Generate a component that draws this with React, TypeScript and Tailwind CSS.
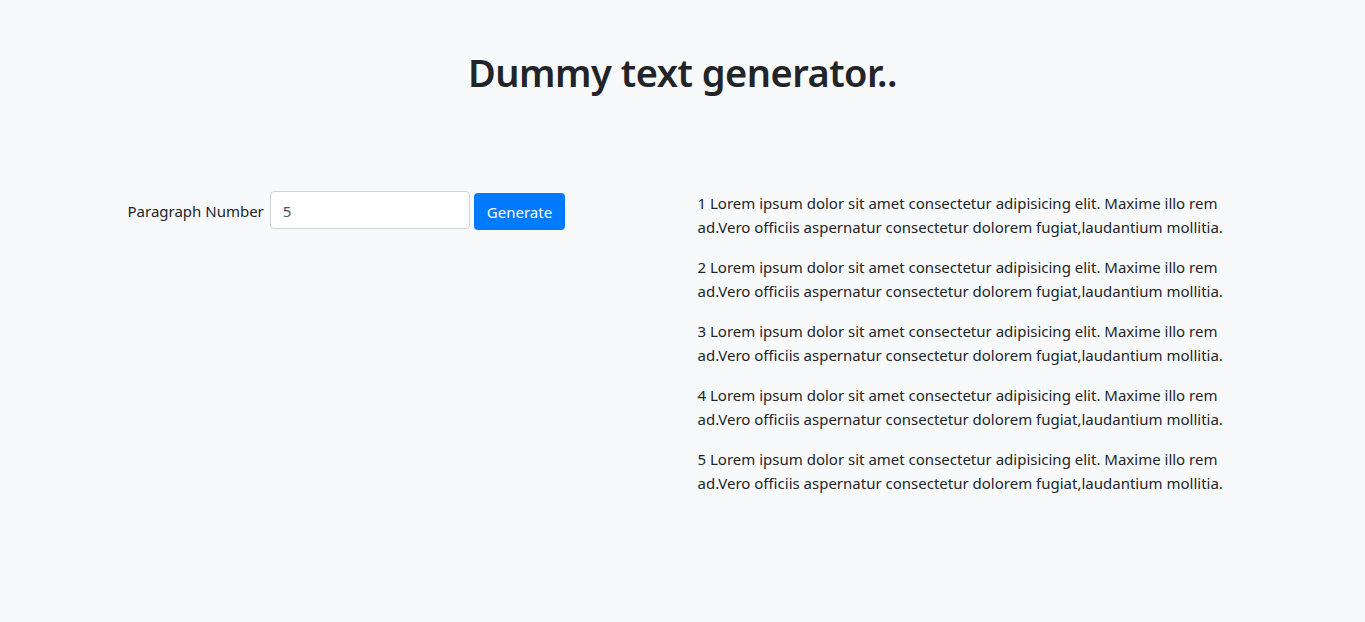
import { useState } from "react";

const lorem =
  "Lorem ipsum dolor sit amet consectetur adipisicing elit. Maxime illo rem ad.Vero officiis aspernatur consectetur dolorem fugiat,laudantium mollitia.";

export default function App() {
  const [count, setCount] = useState("5");
  const [paras, setParas] = useState<number>(5);

  return (
    <div
      className="min-h-[622px] bg-[#f8f9fa] text-[#212529]"
      style={{ fontFamily: '"Noto Sans", "Open Sans", sans-serif' }}
    >
      <h1 className="pt-[48px] text-center text-[38px] font-semibold leading-[48px] tracking-[-0.5px]">
        Dummy text generator..
      </h1>

      <div className="mx-auto mt-[95px] flex w-[1140px]">
        {/* Form */}
        <div className="w-[570px] px-[15px]">
          <form
            className="flex items-start"
            onSubmit={(e) => {
              e.preventDefault();
              setParas(Number(count) || 0);
            }}
          >
            <label className="mr-[6px] mt-[9px] text-[15px] leading-[22px]">
              Paragraph Number
            </label>
            <input
              type="number"
              value={count}
              onChange={(e) => setCount(e.target.value)}
              className="h-[38px] w-[200px] rounded-[4px] border border-[#ced4da] bg-white px-[12px] pt-[2px] text-[15px] text-[#495057] outline-none"
            />
            <button
              type="submit"
              className="ml-[4px] mt-[2px] h-[37px] rounded-[4px] bg-[#007bff] px-[13px] pt-[1px] text-[15px] text-white"
            >
              Generate
            </button>
          </form>
        </div>

        {/* Output */}
        <div className="w-[570px] px-[15px]">
          {Array.from({ length: paras }).map((_, i) => (
            <p key={i} className="mb-[16px] text-[15px] leading-[24px]">
              {`${i + 1} ${lorem}`}
            </p>
          ))}
        </div>
      </div>
    </div>
  );
}
